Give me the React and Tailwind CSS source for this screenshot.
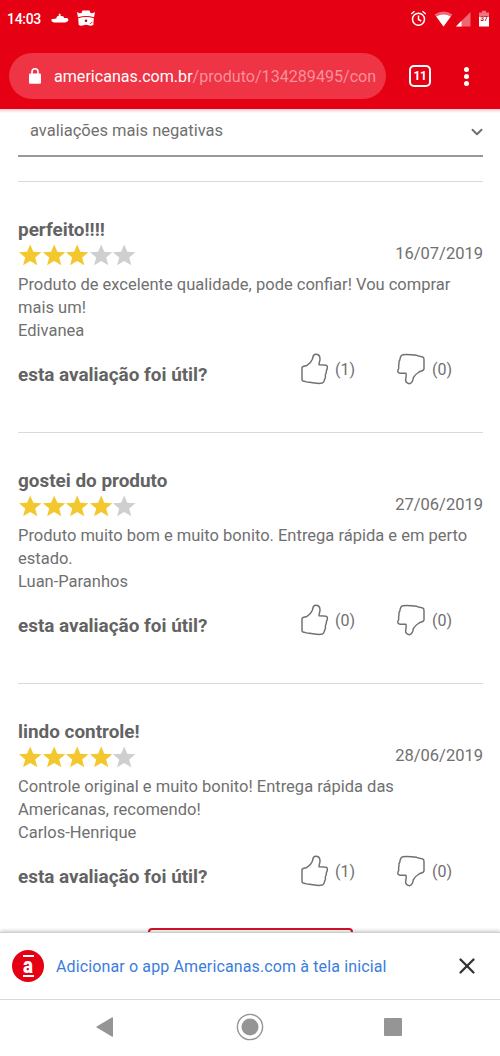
import { X, ChevronDown } from "lucide-react";

const reviews = [
  {
    title: "perfeito!!!!",
    stars: 3,
    date: "16/07/2019",
    lines: ["Produto de excelente qualidade, pode confiar! Vou comprar", "mais um!"],
    author: "Edivanea",
    up: 1,
    down: 0,
  },
  {
    title: "gostei do produto",
    stars: 4,
    date: "27/06/2019",
    lines: ["Produto muito bom e muito bonito. Entrega rápida e em perto", "estado."],
    author: "Luan-Paranhos",
    up: 0,
    down: 0,
  },
  {
    title: "lindo controle!",
    stars: 4,
    date: "28/06/2019",
    lines: ["Controle original e muito bonito! Entrega rápida das", "Americanas, recomendo!"],
    author: "Carlos-Henrique",
    up: 1,
    down: 0,
  },
];

function Star({ filled }) {
  return (
    <svg width="23.5" height="22" viewBox="0 0 23.5 22" className={filled ? "text-[#f3c82f]" : "text-[#cfcfd1]"}>
      <path fill="currentColor" d="M12.2 .4 15.3 7.8 23.5 8.2 17.2 13.4 19.3 21.3 12.2 17 5.1 21.3 7.2 13.4 .9 8.2 9.1 7.8Z" />
    </svg>
  );
}

function ThumbUp() {
  return (
    <svg width="30" height="34" viewBox="60 51 90 102" fill="none" stroke="#707070" strokeWidth="4.4" strokeLinejoin="round">
      <path d="M66 97C70 92 76 94 81 91C88 87 94 81 97 73C99 67 98 58 107 58C116 58 120 64 120 72C120 79 117 82 117 89L133 90C141 90 143 93 142 99C142 103 139 105 139 109C140 114 136 116 136 121C138 127 136 129 134 132C133 139 129 145 122 145C110 146 99 144 88 142C80 142 76 139 69 138C65 136 66 134 66 130Z" />
    </svg>
  );
}

function ThumbDown() {
  return (
    <svg className="-ml-px" width="30" height="34" viewBox="350 51 90 102" fill="none" stroke="#707070" strokeWidth="4.4" strokeLinejoin="round">
      <path d="M371 59C384 57 399 59 412 61C418 64 424 63 430 66C434 67 434 70 434 74L434 102C432 109 425 108 419 111C411 116 405 122 402 128C401 138 398 145 390 146C382 145 378 140 379 133C380 126 382 122 380 115L363 115C356 114 354 109 356 105C358 102 359 100 358 96C357 90 360 88 359 83C358 77 362 78 362 72C363 65 365 60 371 59Z" />
    </svg>
  );
}

function StatusBar() {
  return (
    <div className="h-[37px] pl-[7px] pr-[9px] flex items-center justify-between">
      <div className="flex items-center">
        <span className="pt-px text-[14px] font-medium tracking-[-0.3px] w-[44px]">14:03</span>
        <svg width="18" height="12" viewBox="0 0 18 12" fill="currentColor">
          <path d="M7.8 .8h1.7v2l3 .7.6 1.500h2.900c1.800.4 1.800 3 .4 3.600L14.500 9.500H3L.8 8.400.3 6.300l5-.9.6-2 1.900-.6Z" />
        </svg>
        <svg className="ml-[8px]" width="18" height="17" viewBox="0 0 18 17">
          <path fill="currentColor" d="M0 2 2.5 3.2 4.5 3 5.5.6H12.5L13.5 3 15.5 3.2 18 2 17 7.2Q9 4.6 1 7.2Z" />
          <path fill="currentColor" d="M1.2 8.3Q9 5.7 16.8 8.3L16.3 15Q14 16.2 11.5 15.3 9 14.3 6.5 15.3 4 16.2 1.7 15Z" />
          <circle cx="9" cy="10.8" r="1.3" fill="#a0101c" />
          <path fill="none" stroke="#e60014" strokeWidth=".8" d="M13 13.8l2.5-1.8" />
        </svg>
      </div>
      <div className="flex items-center">
        <svg width="17" height="17" viewBox="0 0 17 17" fill="none" stroke="currentColor" strokeWidth="1.5">
          <circle cx="8.5" cy="9.2" r="6" />
          <path d="M8.5 5.5v4l2.8 1.7M1.3 4l3.2-2.7M15.7 4l-3.2-2.7" />
        </svg>
        <svg className="ml-[7px]" width="19" height="16" viewBox="0 0 19 16" fill="currentColor">
          <path opacity=".4" d="M.5 3.5q9-6 18 0L9.5 15.5Z" />
          <path d="M2.3 5.5q7.2-4 14.4 0L9.5 15.5Z" />
        </svg>
        <svg className="ml-[3px]" width="15" height="16" viewBox="0 0 15 16" fill="currentColor">
          <path opacity=".4" d="M14.5 1v14.5H0Z" />
          <path d="M5.5 9.8v5.7H0Z" />
        </svg>
        <svg className="ml-[8px] mr-[2px]" width="10" height="17" viewBox="0 0 10 17" fill="currentColor">
          <path opacity=".45" d="M3 .8h4v1.700h3v5H0v-5h3Z" />
          <path d="M0 7h10v9.500H0Z" />
          <text x="5" y="11" fontSize="6.5" fontWeight="700" textAnchor="middle" fill="#b8202b">37</text>
        </svg>
      </div>
    </div>
  );
}

function AddressBar() {
  return (
    <div className="mt-4 pl-[9px] flex items-center">
      <div className="w-[377px] h-[46px] rounded-full bg-[#ee3445] pl-[20px] flex items-center">
        <svg className="shrink-0" width="12" height="16" viewBox="0 0 12 16">
          <path fill="none" stroke="currentColor" strokeWidth="1.6" d="M3 7V3.800a3 3 0 0 1 6 0V7" />
          <rect y="5.5" width="12" height="10.2" rx="1.3" fill="currentColor" />
        </svg>
        <div className="ml-[13px] pt-[2px] text-[16.1px] leading-6 whitespace-nowrap">
          americanas.com.br<span className="text-[#f8919a]">/produto/134289495/con</span>
        </div>
      </div>
      <div className="ml-[23px] size-[22px] rounded-[5px] border-2 border-white flex items-center justify-center text-[12px] tracking-[-0.5px] font-bold leading-none">
        11
      </div>
      <div className="ml-[33px] flex flex-col gap-[2px]">
        <span className="size-[5px] rounded-full bg-white" />
        <span className="size-[5px] rounded-full bg-white" />
        <span className="size-[5px] rounded-full bg-white" />
      </div>
    </div>
  );
}

function Review({ review }) {
  return (
    <article className="h-[251px] border-t border-[#dadada] pt-[36px]">
      <h2 className="text-[18.9px] leading-[24px] font-bold text-[#636363]">{review.title}</h2>
      <div className="h-[31px] flex items-start justify-between">
        <div className="flex pt-[2px]">
          {[1, 2, 3, 4, 5].map((n) => (
            <Star key={n} filled={n <= review.stars} />
          ))}
        </div>
        <span className="pt-px text-[16.5px] leading-[22px]">{review.date}</span>
      </div>
      <div className="text-[16.5px] leading-[23px] whitespace-nowrap">
        {review.lines.map((line) => (
          <p key={line}>{line}</p>
        ))}
        <p>{review.author}</p>
      </div>
      <div className="mt-[10px] flex items-start">
        <span className="w-[282px] pt-[11px] text-[18.9px] leading-[24px] font-bold text-[#636363]">esta avaliação foi útil?</span>
        <ThumbUp />
        <span className="ml-[5px] w-[62px] pt-[6px] text-[16px] leading-[24px]">({review.up})</span>
        <ThumbDown />
        <span className="ml-[6px] pt-[6px] text-[16px] leading-[24px]">({review.down})</span>
      </div>
    </article>
  );
}

export default function App() {
  return (
    <div className="w-[500px] h-[1056px] bg-white flex flex-col overflow-hidden font-['Roboto',sans-serif] text-[#707070]">
      <header className="h-[109px] shrink-0 bg-[#e60014] text-white">
        <StatusBar />
        <AddressBar />
      </header>

      <main className="h-[823px] shrink-0 overflow-hidden">
        <div className="h-[4px] bg-linear-to-b from-[#f6c9cf] to-white" />
        <div className="pl-[18px] pr-[17px]">
          <div className="h-[44px] border-b-2 border-[#999] pl-[12px] flex items-start justify-between">
            <span className="pt-[6px] text-[16.5px] leading-[24px]">avaliações mais negativas</span>
            <ChevronDown className="mt-[10px] -mr-[3px]" size={18} strokeWidth={2.6} />
          </div>
          <div className="pt-[24px]">
            {reviews.map((r) => (
              <Review key={r.title} review={r} />
            ))}
          </div>
        </div>
        <div className="-mt-[6px] mx-auto w-[205px] h-[40px] rounded-[4px] border-2 border-[#d3142a]" />
      </main>

      <section className="h-[68px] shrink-0 bg-white border-t border-[#cfcfcf] border-b border-b-[#dadada] shadow-[0_-1px_4px_rgba(0,0,0,0.22)] pl-[12px] pr-[20px] flex items-center">
        <div className="size-[32px] rounded-full bg-[#e60014] text-white flex flex-col items-center justify-center">
          <span className="w-[11px] h-[2px] bg-white" />
          <span className="h-[18px] text-[22px] leading-[17px] font-black scale-x-85">a</span>
          <span className="w-[11px] h-[2px] bg-white" />
        </div>
        <span className="ml-[12px] flex-1 pt-px text-[16px] tracking-[0.13px] whitespace-nowrap text-[#3b7ddd]">
          Adicionar o app Americanas.com à tela inicial
        </span>
        <X size={26} strokeWidth={2.1} className="text-[#333]" />
      </section>

      <nav className="flex-1 bg-white pl-[96px] pb-[2px] flex items-center text-[#959595]">
        <svg width="18" height="20" viewBox="0 0 18 20" fill="currentColor">
          <path d="M16.2.3Q17 0 17 1v18q0 1-.8.7L.7 10.600q-.8-.6 0-1.200Z" />
        </svg>
        <svg className="ml-[122px]" width="28" height="28" viewBox="0 0 28 28">
          <circle cx="14" cy="14" r="12.6" fill="none" stroke="currentColor" strokeWidth="1.4" />
          <circle cx="14" cy="14" r="8.5" fill="currentColor" />
        </svg>
        <span className="ml-[120px] size-[18px] rounded-[1px] bg-[#959595]" />
      </nav>
    </div>
  );
}
